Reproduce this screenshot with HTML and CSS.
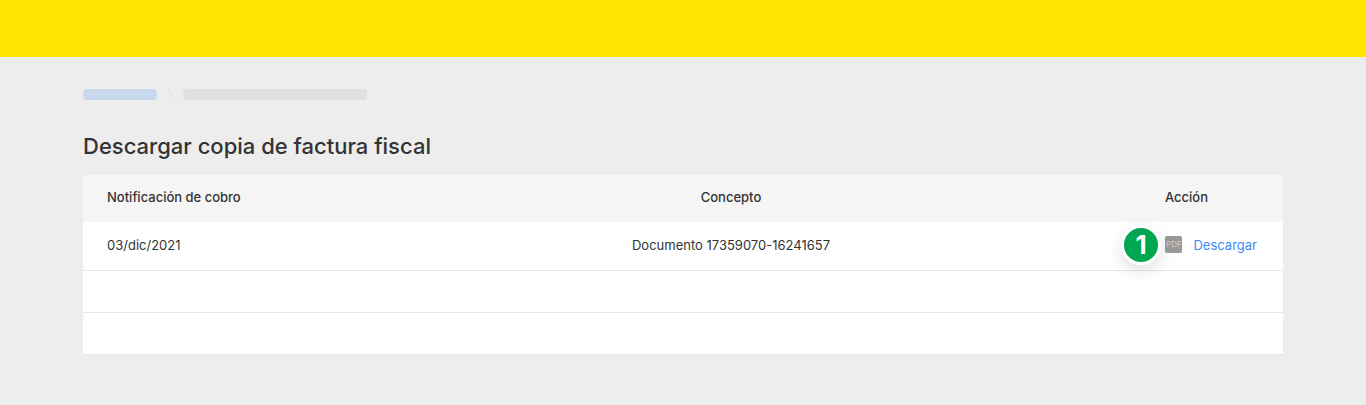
FILE: index.html
```html
<!DOCTYPE html>
<html lang="es">
<head>
    <meta charset="UTF-8">
    <meta name="viewport" content="width=device-width, initial-scale=1.0">
    <title>Descargar copia de factura fiscal</title>
    <link rel="stylesheet" href="styles.css">
</head>
<body>

<header class="top-bar"></header>

<main class="content">
    <div class="breadcrumb">
        <span class="crumb crumb-link"></span>
        <svg class="crumb-arrow" width="6" height="10" viewBox="0 0 6 10"><path d="M1 1l4 4-4 4" fill="none" stroke="#dcdcdc" stroke-width="1"/></svg>
        <span class="crumb crumb-current"></span>
    </div>

    <h1>Descargar copia de factura fiscal</h1>

    <table class="invoice-table">
        <thead>
            <tr>
                <th class="col-date">Notificación de cobro</th>
                <th class="col-concept">Concepto</th>
                <th class="col-action">Acción</th>
            </tr>
        </thead>
        <tbody>
            <tr>
                <td class="col-date">03/dic/2021</td>
                <td class="col-concept">Documento 17359070-16241657</td>
                <td class="col-action">
                    <div class="download">
                        <span class="step-badge">1</span>
                        <span class="pdf-icon">PDF</span>
                        <a href="#">Descargar</a>
                    </div>
                </td>
            </tr>
            <tr class="empty"><td></td><td></td><td></td></tr>
            <tr class="empty"><td></td><td></td><td></td></tr>
        </tbody>
    </table>
</main>

</body>
</html>
```

FILE: styles.css
```css
* {
    box-sizing: border-box;
}
body {
    margin: 0;
    height: 405px;
    overflow: hidden;
    background-color: #ededed;
    font-family: "Inter", Arial, sans-serif;
    color: #333;
}
.top-bar {
    height: 57px;
    background-color: #ffe600;
}
.content {
    width: 1200px;
    margin: 0 auto;
    padding-top: 31px;
}
.breadcrumb {
    display: flex;
    align-items: center;
    height: 12px;
}
.crumb {
    height: 11px;
    border-radius: 4px;
}
.crumb-link {
    width: 74px;
    background-color: #c8d9ee;
}
.crumb-arrow {
    margin: 0 10px;
}
.crumb-current {
    width: 184px;
    background-color: #e0e0e0;
}
h1 {
    margin: 31px 0 14px;
    font-size: 22px;
    line-height: 30px;
    font-weight: 500;
    color: #333;
}
.invoice-table {
    width: 100%;
    border-collapse: collapse;
    background: #fff;
    font-size: 13px;
}
.invoice-table th {
    height: 47px;
    padding: 0 24px 3px;
    background-color: #f5f5f5;
    font-weight: 500;
}
.invoice-table td {
    height: 42px;
    padding: 0 24px;
    border-bottom: 1px solid #e6e6e6;
}
.invoice-table tbody tr:first-child td {
    height: 48px;
    padding-bottom: 2px;
}
.col-date {
    width: 420px;
    text-align: left;
}
.col-concept {
    text-align: center;
}
.col-action {
    width: 324px;
    text-align: right;
}
th.col-action {
    padding-right: 75px;
}
td.col-action {
    padding-right: 26px;
}
.download {
    position: relative;
    display: flex;
    justify-content: flex-end;
    align-items: center;
    gap: 11px;
}
.download a {
    color: #4189f5;
    text-decoration: none;
}
.pdf-icon {
    width: 17px;
    height: 17px;
    border-radius: 2px;
    background-color: #999;
    color: #cfcfcf;
    font-size: 8px;
    line-height: 17px;
    text-align: center;
}
.step-badge {
    position: absolute;
    right: 96px;
    top: 50%;
    margin-top: -20px;
    width: 40px;
    height: 40px;
    border-radius: 50%;
    border: 3px solid #fff;
    background-color: #00a650;
    color: #fff;
    font-size: 26px;
    font-weight: 700;
    line-height: 34px;
    text-align: center;
    box-shadow: 0 6px 16px rgba(0, 0, 0, 0.12);
}
```
